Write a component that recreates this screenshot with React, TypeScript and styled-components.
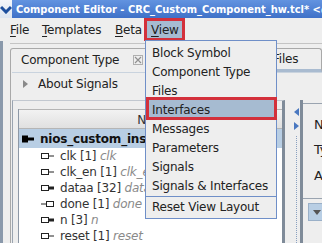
import React from 'react';
import styled, { createGlobalStyle, css } from 'styled-components';

const Global = createGlobalStyle`
  html, body { margin: 0; padding: 0; background: #eeeeee; }
  body { font-family: "DejaVu Sans", sans-serif; }
`;

const Frame = styled.div`
  position: relative;
  width: 322px;
  height: 243px;
  overflow: hidden;
  background: #eeeeee;
  display: flex;
  flex-direction: column;
  font-family: "DejaVu Sans", sans-serif;
  font-size: 12px;
  letter-spacing: -0.2px;
  color: #222;
`;

const TitleBar = styled.div`
  height: 18px;
  flex: none;
  display: flex;
  align-items: center;
  background: linear-gradient(#6293e0, #3f71c8);
  color: #fff;
  letter-spacing: 0;
`;

const AppIcon = styled.div`
  width: 18px;
  height: 18px;
  background: linear-gradient(#f4f6fa, #dde5f0);
  display: flex;
  align-items: center;
  justify-content: center;
`;

const TitleText = styled.div`
  margin-left: 4px;
  font-family: "DejaVu Sans Condensed", "DejaVu Sans", sans-serif;
  font-stretch: condensed;
  font-weight: bold;
  font-size: 11px;
  white-space: nowrap;
`;

const MenuBar = styled.div`
  height: 23px;
  flex: none;
  display: flex;
  padding-left: 5px;
  background: #eeeeee;
`;

const MenuTitle = styled.div<{ $active?: boolean; $w: number }>`
  width: ${(p) => p.$w}px;
  flex: none;
  display: flex;
  align-items: center;
  padding-left: 5px;
  box-sizing: border-box;
  height: 100%;
  white-space: nowrap;
  u { text-decoration-thickness: 1px; text-underline-offset: 2px; }
  ${(p) =>
    p.$active &&
    css`
      background: #a6bbd1;
      border: 3px solid #d3303b;
      padding-left: 4px;
      margin-left: 1px;
    `}
`;

const Workspace = styled.div`
  flex: 1;
  display: flex;
  min-height: 0;
`;

const WindowEdge = styled.div`
  width: 3px;
  flex: none;
  background: #8a99ab;
`;

const Dock = styled.div`
  flex: 1;
  display: flex;
  flex-direction: column;
  padding-left: 7px;
  min-width: 0;
`;

const TabStrip = styled.div`
  height: 29px;
  margin-top: 2px;
  flex: none;
  display: flex;
  align-items: flex-end;
  border-top: 1px solid #c4c4c4;
  box-sizing: border-box;
`;

const Tab = styled.div<{ $selected?: boolean; $w: number }>`
  width: ${(p) => p.$w}px;
  flex: none;
  height: 24px;
  box-sizing: border-box;
  display: flex;
  align-items: center;
  gap: 14px;
  padding: 0 0 2px 10px;
  border: 1px solid #a9a9a9;
  border-bottom: none;
  border-radius: 3px 3px 0 0;
  background: #eeeeee;
  white-space: nowrap;
  ${(p) =>
    !p.$selected &&
    css`
      border-bottom: 3px solid #a9bbd0;
      padding-bottom: 0;
    `}
`;

const TabGap = styled.div`
  flex: 1;
  align-self: stretch;
  border-bottom: 3px solid #a9bbd0;
`;

const Content = styled.div`
  flex: 1;
  display: flex;
  flex-direction: column;
  border-left: 1px solid #a9a9a9;
  padding-left: 1px;
  min-height: 0;
`;

const Section = styled.div`
  height: 22px;
  flex: none;
  display: flex;
  align-items: center;
  padding-left: 11px;
  gap: 10px;
  border-top: 1px solid #c9d3de;
`;

const Split = styled.div`
  flex: 1;
  display: flex;
  min-height: 0;
  padding-top: 5px;
`;

const TablePane = styled.div`
  width: 273px;
  flex: none;
  box-sizing: border-box;
  border-left: 1px solid #9aa4b0;
  border-top: 1px solid #c2c8d0;
  border-right: 3px solid #7f8b99;
  padding: 8px 0 0 5px;
  display: flex;
  flex-direction: column;
`;

const Table = styled.div`
  flex: 1;
  border-left: 1px solid #8d98a6;
  background: #ffffff;
  display: flex;
  flex-direction: column;
`;

const HeaderRow = styled.div`
  height: 20px;
  flex: none;
  box-sizing: border-box;
  display: flex;
  align-items: center;
  justify-content: center;
  padding: 2px 0 0 8px;
  background: linear-gradient(#f2f2f2, #e0e0e0);
  border-top: 1px solid #b5b5b5;
  border-bottom: 1px solid #b5b5b5;
  color: #333;
`;

const Row = styled.div<{ $selected?: boolean; $indent: number; $h: number }>`
  height: ${(p) => p.$h}px;
  flex: none;
  display: flex;
  align-items: center;
  gap: 6px;
  padding-left: ${(p) => p.$indent}px;
  white-space: nowrap;
  color: #333;
  ${(p) =>
    p.$selected &&
    css`
      background: #b8cee4;
      font-weight: bold;
      color: #111;
      padding-top: 1px;
    `}
`;

const Hint = styled.span`
  font-style: italic;
  color: #8a8a8a;
`;

const Splitter = styled.div`
  width: 14px;
  flex: none;
  display: flex;
  flex-direction: column;
  align-items: flex-end;
  padding: 8px 1px 0 0;
  gap: 6px;
  border-right: 3px solid #7f8b99;
`;

const DotLine = styled.div`
  flex: 1;
  width: 0;
  margin-right: 2px;
  border-left: 1px dotted #8aa0c0;
`;

const DetailPane = styled.div`
  flex: 1;
  display: flex;
  flex-direction: column;
  margin-top: 3px;
  border-top: 1px solid #9aa4b0;
  padding: 8px 0 0 11px;
`;

const FieldLabel = styled.div<{ $h: number }>`
  height: ${(p) => p.$h}px;
  flex: none;
  display: flex;
  align-items: center;
  font-size: 13px;
  white-space: nowrap;
`;

const DetailBox = styled.div`
  margin: 10px 0 0 -11px;
  border-top: 1px solid #9aa4b0;
  padding: 4px 0 0 5px;
`;

const DropButton = styled.div`
  width: 20px;
  height: 16px;
  background: #b8cee4;
  border: 1px solid #9ab0c8;
  display: flex;
  align-items: center;
  padding-left: 4px;
`;

const Popup = styled.div`
  position: absolute;
  left: 145px;
  top: 40px;
  width: 132px;
  box-sizing: border-box;
  border: 1px solid #6f8fc8;
  background: #eeeeee;
  padding: 2px 0 2px;
  display: flex;
  flex-direction: column;
`;

const PopupItem = styled.div<{ $hot?: boolean }>`
  position: relative;
  height: 19px;
  display: flex;
  align-items: center;
  padding-left: 6px;
  white-space: nowrap;
  color: #222;
  ${(p) =>
    p.$hot &&
    css`
      background: #a6bbd1;
      &::after {
        content: '';
        position: absolute;
        left: 0;
        right: -1px;
        top: -3px;
        bottom: -1px;
        border: 3px solid #d3303b;
      }
    `}
`;

const Separator = styled.div`
  height: 1px;
  margin: 1px 0 0;
  background: #6f8fc8;
`;

type Kind = 'in' | 'inbus' | 'out' | 'root';

const PortIcon = ({ kind }: { kind: Kind }) => {
  if (kind === 'root')
    return (
      <svg width="12" height="8" viewBox="0 0 12 8">
        <rect x="0" y="0.5" width="6" height="7" fill="#000" />
        <rect x="6" y="2.5" width="6" height="3" fill="#000" />
      </svg>
    );
  if (kind === 'out')
    return (
      <svg width="13" height="8" viewBox="0 0 13 8">
        <line x1="0" y1="4" x2="5" y2="4" stroke="#222" strokeWidth="1" />
        <rect x="5.5" y="1.5" width="7" height="5" fill="#fff" stroke="#222" />
      </svg>
    );
  return (
    <svg width="13" height="8" viewBox="0 0 13 8">
      <rect x="0.5" y="1.5" width="7" height="5" fill="#fff" stroke="#222" />
      {kind === 'inbus' ? (
        <rect x="8" y="2.5" width="5" height="3" fill="#222" />
      ) : (
        <line x1="8" y1="4" x2="13" y2="4" stroke="#222" strokeWidth="1" />
      )}
    </svg>
  );
};

const signals: { name: string; width: number; hint: string; kind: Kind }[] = [
  { name: 'clk', width: 1, hint: 'clk', kind: 'in' },
  { name: 'clk_en', width: 1, hint: 'clk_en', kind: 'in' },
  { name: 'dataa', width: 32, hint: 'dataa', kind: 'inbus' },
  { name: 'done', width: 1, hint: 'done', kind: 'out' },
  { name: 'n', width: 3, hint: 'n', kind: 'inbus' },
  { name: 'reset', width: 1, hint: 'reset', kind: 'in' },
];

const viewItems = [
  'Block Symbol',
  'Component Type',
  'Files',
  'Interfaces',
  'Messages',
  'Parameters',
  'Signals',
  'Signals & Interfaces',
];

export default function App() {
  return (
    <>
      <Global />
      <Frame>
        <TitleBar>
          <AppIcon>
            <svg width="12" height="9" viewBox="0 0 12 9">
              <path d="M1 2 L6 7 L11 2" fill="none" stroke="#1d4f9e" strokeWidth="3" strokeLinejoin="miter" />
            </svg>
          </AppIcon>
          <TitleText>Component Editor - CRC_Custom_Component_hw.tcl* &lt;@pg-iss-tcl&gt;</TitleText>
        </TitleBar>
        <MenuBar>
          <MenuTitle $w={32}>
            <span><u>F</u>ile</span>
          </MenuTitle>
          <MenuTitle $w={73}>
            <span><u>T</u>emplates</span>
          </MenuTitle>
          <MenuTitle $w={33}>
            <span><u>B</u>eta</span>
          </MenuTitle>
          <MenuTitle $active $w={41}>
            <span><u>V</u>iew</span>
          </MenuTitle>
        </MenuBar>
        <Workspace>
          <WindowEdge />
          <Dock>
            <TabStrip>
              <Tab $selected $w={142}>
                Component Type
                <svg width="10" height="10" viewBox="0 0 10 10">
                  <rect x="0.5" y="0.5" width="9" height="9" fill="none" stroke="#b0b0b0" />
                  <path d="M2 2 L8 8 M8 2 L2 8" stroke="#909090" strokeWidth="1.2" />
                </svg>
              </Tab>
              <TabGap />
              <Tab $w={60}>Files</Tab>
            </TabStrip>
            <Content>
              <Section>
                <svg width="5" height="8" viewBox="0 0 5 8">
                  <path d="M0 0 L5 4 L0 8 Z" fill="#8a8a8a" />
                </svg>
                About Signals
              </Section>
              <Split>
                <TablePane>
                  <Table>
                    <HeaderRow>Name</HeaderRow>
                    <Row $selected $indent={3} $h={18}>
                      <PortIcon kind="root" />
                      nios_custom_instruction_slave
                    </Row>
                    {signals.map((s) => (
                      <Row key={s.name} $indent={22} $h={16}>
                        <PortIcon kind={s.kind} />
                        <span>
                          {s.name} [{s.width}] <Hint>{s.hint}</Hint>
                        </span>
                      </Row>
                    ))}
                  </Table>
                </TablePane>
                <Splitter>
                  <svg width="5" height="8" viewBox="0 0 5 8">
                    <path d="M5 0 L0 4 L5 8 Z" fill="#4a78c0" />
                  </svg>
                  <svg width="5" height="8" viewBox="0 0 5 8">
                    <path d="M0 0 L5 4 L0 8 Z" fill="#4a78c0" />
                  </svg>
                  <DotLine />
                </Splitter>
                <DetailPane>
                  <FieldLabel $h={24}>Name:</FieldLabel>
                  <FieldLabel $h={26}>Type:</FieldLabel>
                  <FieldLabel $h={26}>Associated:</FieldLabel>
                  <DetailBox>
                    <DropButton>
                      <svg width="8" height="5" viewBox="0 0 8 5">
                        <path d="M0 0 L8 0 L4 5 Z" fill="#555" />
                      </svg>
                    </DropButton>
                  </DetailBox>
                </DetailPane>
              </Split>
            </Content>
          </Dock>
        </Workspace>
        <Popup>
          {viewItems.map((v) => (
            <PopupItem key={v} $hot={v === 'Interfaces'}>
              {v}
            </PopupItem>
          ))}
          <Separator />
          <PopupItem>Reset View Layout</PopupItem>
        </Popup>
      </Frame>
    </>
  );
}
